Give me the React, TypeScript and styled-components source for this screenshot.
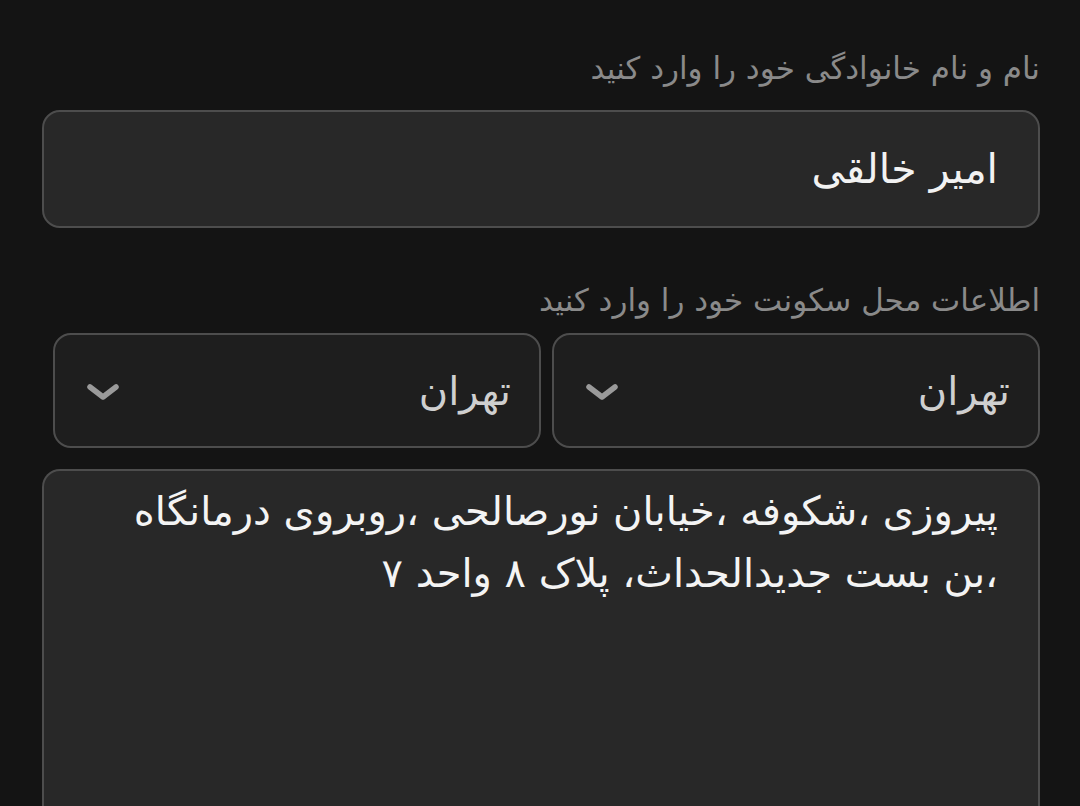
import React from "react";
import styled, { createGlobalStyle } from "styled-components";

const Global = createGlobalStyle`
  html, body { margin: 0; padding: 0; background: #141414; }
  body { font-family: "DejaVu Sans", sans-serif; overflow: hidden; }
`;

const Form = styled.div`
  direction: rtl;
  display: flex;
  flex-direction: column;
  padding: 48px 40px 0 42px;
  height: 806px;
  box-sizing: border-box;
`;

const Label = styled.div<{ $top?: number; $bottom?: number }>`
  color: #8a8a8a;
  font-size: 31px;
  line-height: 40px;
  margin-top: ${(p) => p.$top ?? 0}px;
  margin-bottom: ${(p) => p.$bottom ?? 22}px;
`;

const TextInput = styled.div`
  height: 118px;
  box-sizing: border-box;
  border: 2px solid #4d4d4d;
  border-radius: 18px;
  background: #282828;
  color: #f2f2f2;
  font-size: 41px;
  display: flex;
  align-items: center;
  padding: 0 40px;
`;

const SelectRow = styled.div`
  display: grid;
  grid-template-columns: 1fr 1fr;
  gap: 11px;
  margin-left: 11px;
`;

const Select = styled.div`
  height: 115px;
  box-sizing: border-box;
  border: 2px solid #4d4d4d;
  border-radius: 18px;
  background: #1e1e1e;
  color: #cfcfcf;
  font-size: 40px;
  display: flex;
  align-items: center;
  justify-content: space-between;
  padding: 0 28px 0 31px;
`;

const Chevron = styled.svg`
  width: 34px;
  height: 26px;
  color: #9a9a9a;
`;

const TextArea = styled.div`
  margin-top: 21px;
  flex: 1;
  box-sizing: border-box;
  border: 2px solid #4d4d4d;
  border-bottom: none;
  border-radius: 18px 18px 0 0;
  background: #282828;
  color: #f4f4f4;
  font-size: 40px;
  line-height: 62px;
  padding: 9px 40px 0 40px;
`;

const ChevronIcon = () => (
  <Chevron viewBox="0 0 34 26" fill="none">
    <path d="M4 9 L17 19 L30 9" stroke="currentColor" strokeWidth="5.5" strokeLinecap="round" strokeLinejoin="round" />
  </Chevron>
);

export default function App() {
  return (
    <>
      <Global />
      <Form>
        <Label>نام و نام خانوادگی خود را وارد کنید</Label>
        <TextInput>امیر خالقی</TextInput>
        <Label $top={52} $bottom={13}>اطلاعات محل سکونت خود را وارد کنید</Label>
        <SelectRow>
          <Select>
            <span>تهران</span>
            <ChevronIcon />
          </Select>
          <Select>
            <span>تهران</span>
            <ChevronIcon />
          </Select>
        </SelectRow>
        <TextArea>
          پیروزی ،شکوفه ،خیابان نورصالحی ،روبروی درمانگاه ،بن بست جدیدالحداث، پلاک ۸ واحد ۷
        </TextArea>
      </Form>
    </>
  );
}
